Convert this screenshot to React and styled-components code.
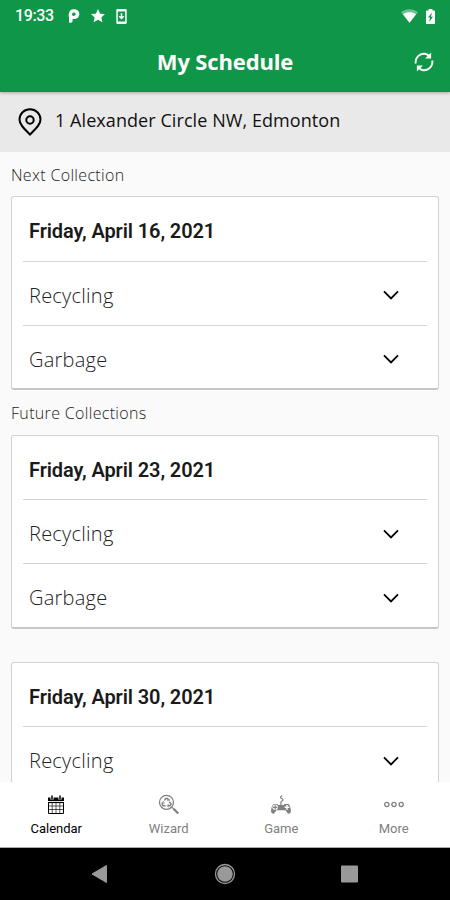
import React from 'react';
import styled, { createGlobalStyle } from 'styled-components';

const GlobalStyle = createGlobalStyle`
  * {
    box-sizing: border-box;
  }

  body {
    margin: 0;
    background-color: #fafafa;
  }
`;

const Container = styled.div`
  display: flex;
  flex-direction: column;
  height: 900px;
  width: 450px;
  overflow: hidden;
  background-color: #fafafa;
  color: #111;
  font-family: 'Open Sans', 'Noto Sans', sans-serif;
`;

const Top = styled.div`
  flex: none;
  height: 92px;
  background-color: #109648;
  color: #fff;
  box-shadow: 0 1px 3px rgba(0, 0, 0, 0.3);
  z-index: 1;
`;

const StatusBar = styled.div`
  display: flex;
  align-items: center;
  height: 32px;
  padding: 0 15px;
`;

const Clock = styled.span`
  width: 53px;
  font: 500 16px/32px Roboto, sans-serif;
  letter-spacing: -0.4px;
`;

const StatusIcons = styled.div`
  display: flex;
  align-items: center;
  gap: ${(props) => props.$gap}px;
  margin-left: ${(props) => (props.$right ? 'auto' : 0)};
`;

const Header = styled.div`
  display: grid;
  grid-template-columns: 60px 1fr 60px;
  align-items: center;
  height: 60px;
`;

const Title = styled.h1`
  grid-column: 2;
  margin: 0;
  padding-bottom: 2px;
  text-align: center;
  font-size: 22px;
  font-weight: 700;
  line-height: 56px;
  white-space: nowrap;
  letter-spacing: -0.15px;
`;

const Refresh = styled.div`
  display: flex;
  padding-left: 24px;
`;

const Address = styled.div`
  flex: none;
  display: flex;
  align-items: center;
  height: 60px;
  padding-left: 18px;
  gap: 13px;
  background-color: #e9e9e9;
  color: #111;
`;

const AddressText = styled.span`
  font-size: 18px;
  font-weight: 500;
  line-height: 24px;
  padding-bottom: 4px;
  letter-spacing: 0.07px;
  white-space: nowrap;
`;

const Schedule = styled.div`
  flex: 1;
  min-height: 0;
  overflow: hidden;
  padding: 0 11px;
`;

const SectionLabel = styled.h2`
  margin: 0;
  height: ${(props) => props.$height}px;
  font-size: 16px;
  font-weight: 350;
  line-height: 46px;
  letter-spacing: 0.33px;
  color: #222;
`;

const Card = styled.section`
  height: 194px;
  margin-bottom: ${(props) => props.$gap || 0}px;
  padding: 0 11px;
  border: 1px solid #d2d2d2;
  border-bottom: 2px solid #c6c6c6;
  border-radius: 3px;
  background-color: #fff;
`;

const CardDate = styled.h3`
  margin: 0;
  height: 63.2px;
  padding-left: 6px;
  font: 600 20px/69px Roboto, sans-serif;
  letter-spacing: -0.1px;
  color: #1a1a1a;
`;

const Row = styled.div`
  display: flex;
  align-items: center;
  justify-content: space-between;
  height: 64px;
  padding: 4px 27px 0 6px;
  border-top: 1px solid #d6d6d6;
  font-size: 20px;
  font-weight: 350;
  letter-spacing: 0.25px;
  color: #222;
`;

const TabBar = styled.nav`
  flex: none;
  display: grid;
  grid-template-columns: repeat(4, 1fr);
  height: 65px;
  background-color: #fff;
`;

const Tab = styled.div`
  display: flex;
  flex-direction: column;
  align-items: center;
  padding-top: 11px;
  font: 400 13px/16px Roboto, sans-serif;
  color: ${(props) => (props.$active ? '#000' : '#808080')};
`;

const TabIcon = styled.svg`
  width: 24px;
  height: 24px;
  margin-bottom: 4px;
`;

const SystemNav = styled.div`
  flex: none;
  display: flex;
  align-items: center;
  justify-content: space-between;
  height: 53px;
  padding: 0 91px 0 90px;
  border-top: 1px solid #aaa;
  background-color: #000;
`;

const Chevron = () => (
  <svg width="18" height="12" viewBox="0 0 18 12" fill="none" stroke="#000" strokeWidth="1.8">
    <path d="M2 2.400 9 9.400 16 2.400" />
  </svg>
);

const CalendarIcon = () => (
  <TabIcon viewBox="0 0 24 24" fill="none" stroke="currentColor">
    <path d="M4 4.500h16v3.500H4z" fill="currentColor" stroke="none" />
    <path d="M8 2.500v4M16 2.500v4" stroke="#fff" strokeWidth="3.200" />
    <path d="M8 2.500v3.700M16 2.500v3.700" strokeWidth="1.500" />
    <path d="M4.500 9v11.500h15V9" />
    <path d="M4 9.500h16" strokeWidth="1.200" />
    <path d="M4.500 13h15M4.500 16.500h15M8.200 9.500v11M12 9.500v11M15.800 9.500v11" strokeWidth=".65" />
  </TabIcon>
);

const WizardIcon = () => (
  <TabIcon viewBox="0 0 24 24" fill="none" stroke="currentColor">
    <circle cx="9.500" cy="9.300" r="7" strokeWidth="1.300" />
    <path d="m14.800 14.300 1.800 1.600" strokeWidth="1.200" />
    <path d="m16.500 15.800 4.800 4.700" strokeWidth="2.300" />
    <path
      d="m7.500 7.500 1.100-2h1.900l1 1.700M12.500 8.800l1.500 2.500-.9 1.500h-2.200M8.500 12.800H6l-.9-1.500 1.200-2"
      strokeWidth="1.500"
    />
    <path d="m10 7.700 2.400.3.400-2.300M11.700 11l-1.800 1.800 1.800 1.600M4.700 9.300l2-.6.700 2" strokeWidth=".7" />
  </TabIcon>
);

const GameIcon = () => (
  <TabIcon viewBox="0 0 24 24" fill="currentColor">
    <path
      d="M11.900 12V9.300c0-1.300 2-1.400 2-2.600 0-1.400-2.300-.9-2.300-2.300 0-.9.800-1.100 1.600-1.600"
      fill="none"
      stroke="currentColor"
      strokeWidth="1.200"
    />
    <path d="M4.500 11h4l.7.900h5.600l.7-.9h4c1.800 1.700 2.800 5.500 2.300 8-.5 2.200-2.700 2.200-3.700.5l-1.600-2.300h-9l-1.600 2.300c-1 1.700-3.200 1.700-3.700-.5-.5-2.500.5-6.300 2.300-8Z" />
    <circle cx="6.200" cy="14.300" r="2.700" fill="#fff" />
    <path d="M6.200 12.200v4.200M4.100 14.300h4.200" stroke="currentColor" strokeWidth="1.300" />
    <path d="M18 11.900v4.800M15.600 14.300h4.800" stroke="#fff" strokeWidth="1.500" />
  </TabIcon>
);

const MoreIcon = () => (
  <TabIcon viewBox="0 0 24 24" fill="none" stroke="currentColor" strokeWidth="1.300">
    <circle cx="4.800" cy="11.500" r="2.100" />
    <circle cx="12" cy="11.500" r="2.100" />
    <circle cx="19.200" cy="11.500" r="2.100" />
  </TabIcon>
);

const tabs = [
  { label: 'Calendar', Icon: CalendarIcon, active: true },
  { label: 'Wizard', Icon: WizardIcon },
  { label: 'Game', Icon: GameIcon },
  { label: 'More', Icon: MoreIcon },
];

const Collection = ({ date, items, gap }) => (
  <Card $gap={gap}>
    <CardDate>{date}</CardDate>
    {items.map((item) => (
      <Row key={item}>
        {item}
        <Chevron />
      </Row>
    ))}
  </Card>
);

const App = () => {
  return (
    <Container>
      <GlobalStyle />
      <Top>
        <StatusBar>
          <Clock>19:33</Clock>
          <StatusIcons $gap={11}>
            <svg width="12" height="14" viewBox="0 0 12 14">
              <path
                fill="#fff"
                fillRule="evenodd"
                d="M5.800.300c3.200 0 5.500 2 5.500 4.800 0 3-2.300 5-5.500 5H4.600v1.300c0 1.300-.7 2.300-1.900 2.300H1V8.300C.7 7.500.500 6.400.700 5.200 1 2.300 2.900.300 5.800.300ZM5.600 3.400c-1 0-1.500.8-1.500 1.900 0 .9.500 1.600 1.400 1.600 1.300 0 2.200-.7 2.200-1.800 0-1-.8-1.700-2.100-1.700Z"
              />
            </svg>
            <svg width="14" height="14" viewBox="0 0 13 13">
              <path fill="#fff" d="m6.500 0 2 4.300 4.500.4-3.400 3.100 1 4.600-4.100-2.400-4.100 2.400 1-4.600L0 4.700l4.500-.4z" />
            </svg>
            <svg width="11" height="15" viewBox="0 0 11 15">
              <rect x=".3" width="10.400" height="15" rx="1.300" fill="#fff" />
              <path fill="#109648" d="M1.800 2.500h7.400v10H1.800z" />
              <path d="M5.500 4.200V9M3.300 7.200l2.200 2.300 2.200-2.300" fill="none" stroke="#fff" strokeWidth="1.500" />
            </svg>
          </StatusIcons>
          <StatusIcons $gap={8} $right>
            <svg width="17" height="14" viewBox="0 0 17 14">
              <path fill="#fff" fillOpacity=".4" d="M0 3.200C5-.7 12-.7 17 3.200L8.500 13.800z" />
              <path fill="#fff" d="M2 5.200c4-2.600 9-2.600 13 0l-6.500 8.600z" />
            </svg>
            <svg width="9" height="15" viewBox="0 0 9 15">
              <path fill="#fff" d="M2.600 0h3.800v1.400H8c.6 0 1 .4 1 1V14c0 .6-.4 1-1 1H1c-.6 0-1-.4-1-1V2.400c0-.6.4-1 1-1h1.600z" />
              <path fill="#109648" d="M6 3.500 2 8.500h2L3.200 13 7 7.700H5z" />
            </svg>
          </StatusIcons>
        </StatusBar>
        <Header>
          <Title>My Schedule</Title>
          <Refresh>
            <svg width="20" height="20" viewBox="0 0 20 20" fill="none" stroke="#fff" strokeWidth="1.900">
              <path d="M1.700 11.500C.900 5.500 6 1 11 1.800c1.800.3 3.200 1.100 4.300 2.300M18.300 8.500C19.100 14.500 14 19 9 18.200c-1.800-.3-3.200-1.100-4.300-2.300" />
              <path d="M17.100.400v6h-6zM2.900 19.600v-6h6z" fill="#fff" stroke="none" />
            </svg>
          </Refresh>
        </Header>
      </Top>
      <Address>
        <svg width="24" height="28" viewBox="0 0 24 28" fill="none" stroke="#000" strokeWidth="2">
          <path d="M12 26.500C7 21.500 1.500 17 1.500 11.500a10.500 10.300 0 0 1 21 0C22.500 17 17 21.500 12 26.500Z" />
          <circle cx="12" cy="12" r="3.700" />
        </svg>
        <AddressText>1 Alexander Circle NW, Edmonton</AddressText>
      </Address>
      <Schedule>
        <SectionLabel $height={44.45}>Next Collection</SectionLabel>
        <Collection date="Friday, April 16, 2021" items={['Recycling', 'Garbage']} />
        <SectionLabel $height={44.7}>Future Collections</SectionLabel>
        <Collection date="Friday, April 23, 2021" items={['Recycling', 'Garbage']} gap={33} />
        <Collection date="Friday, April 30, 2021" items={['Recycling']} />
      </Schedule>
      <TabBar>
        {tabs.map(({ label, Icon, active }) => (
          <Tab key={label} $active={active}>
            <Icon />
            {label}
          </Tab>
        ))}
      </TabBar>
      <SystemNav>
        <svg width="19" height="20" viewBox="0 0 19 20">
          <path d="M2 10 16.500 1.500v17z" fill="#999" stroke="#999" strokeLinejoin="round" />
        </svg>
        <svg width="22" height="22" viewBox="0 0 22 22">
          <circle cx="11" cy="11" r="9.500" fill="none" stroke="#999" strokeWidth="1.300" />
          <circle cx="11" cy="11" r="7.800" fill="#999" />
        </svg>
        <svg width="19" height="18" viewBox="0 0 19 18">
          <rect x="1" y="0.500" width="17" height="17" rx="1" fill="#999" />
        </svg>
      </SystemNav>
    </Container>
  );
};

export default App;
